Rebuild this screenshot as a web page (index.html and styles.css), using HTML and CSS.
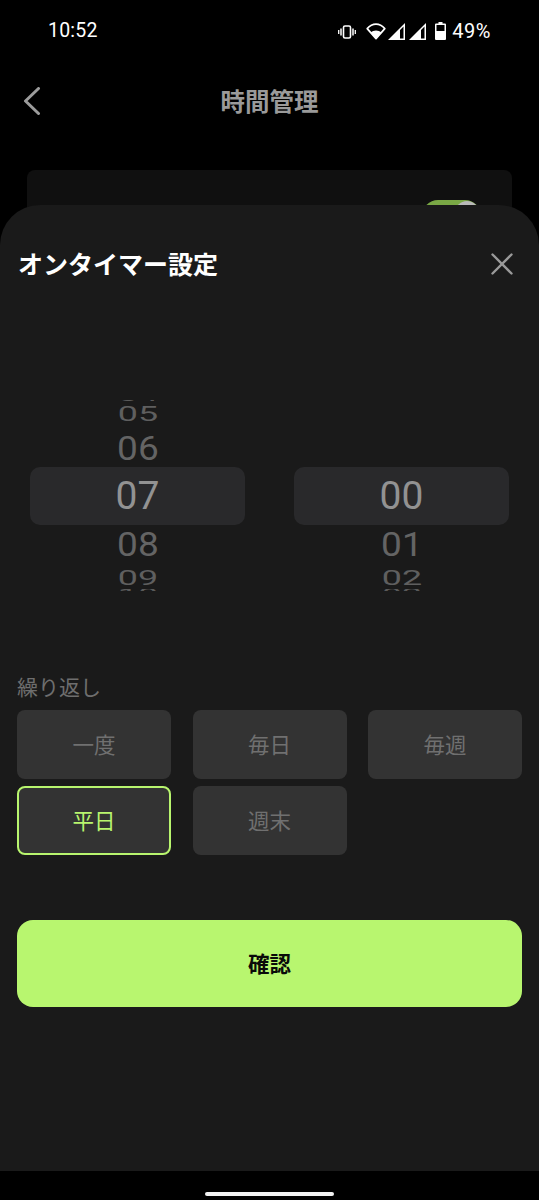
FILE: index.html
```html
<!DOCTYPE html>
<html lang="ja">
<head>
<meta charset="utf-8">
<title>時間管理</title>
<link rel="stylesheet" href="styles.css">
</head>
<body>
<div class="page">
  <div class="content">
    <div class="status">
      <span class="time">10:52</span>
      <div class="status-icons">
        <svg class="i-vib" width="18" height="14" viewBox="0 0 18 14"><rect x="5.5" y="1" width="7" height="12" rx="1.5" fill="none" stroke="#fff" stroke-width="1.6"/><path d="M3 3.5v7M15 3.5v7" stroke="#fff" stroke-width="1.5"/><path d="M.7 5v4M17.3 5v4" stroke="#fff" stroke-width="1.3"/></svg>
        <svg class="i-wifi" width="20" height="17" viewBox="0 0 20 17"><path d="M10 15.6 1.2 5.6C3.5 3 6.6 1.2 10 1.2s6.5 1.800 8.800 4.400z" fill="none" stroke="#fff" stroke-width="1.700" stroke-linejoin="round"/><path d="M10 16 4.600 9.400C6 8.200 8 7.400 10 7.400s4 .8 5.400 2z" fill="#fff"/></svg>
        <svg class="i-sig" width="17" height="17" viewBox="0 0 17 17"><path d="M0 17 17 0v17zM15.500 3.600 12 7.100v8.400h3.500z" fill="#fff" fill-rule="evenodd"/></svg>
        <svg class="i-sig" width="17" height="17" viewBox="0 0 17 17"><path d="M0 17 17 0v17zM15.500 3.600 12 7.100v8.400h3.500z" fill="#fff" fill-rule="evenodd"/></svg>
        <svg class="i-bat" width="11" height="18" viewBox="0 0 11 18"><path d="M3.500 0h4v1.500H10a1 1 0 0 1 1 1V17a1 1 0 0 1-1 1H1a1 1 0 0 1-1-1V2.500a1 1 0 0 1 1-1h2.500z" fill="#fff"/><rect x="1.500" y="3" width="8" height="6" fill="#000"/></svg>
        <span class="pct">49%</span>
      </div>
    </div>
    <header class="top">
      <svg class="back" width="18" height="28" viewBox="0 0 18 28"><path d="M15.500 1.500 2.500 14l13 12.500" fill="none" stroke="#9c9c9c" stroke-width="3" stroke-linecap="round" stroke-linejoin="round"/></svg>
      <h1 class="top-title">時間管理</h1>
    </header>
    <div class="card">
      <div class="toggle"><span class="thumb"></span></div>
    </div>

    <section class="sheet">
      <div class="sheet-head">
        <h2 class="sheet-title">オンタイマー設定</h2>
        <svg class="close" width="22" height="22" viewBox="0 0 22 22"><path d="M1.500 1.500l19 19M20.500 1.500l-19 19" stroke="#9a9a9a" stroke-width="2.400" stroke-linecap="round"/></svg>
      </div>
      <div class="picker">
        <div class="wheel">
          <div class="r r-frag"><span>04</span></div>
          <div class="r r-far"><span>05</span></div>
          <div class="r r-near"><span>06</span></div>
          <div class="r r-sel"><span>07</span></div>
          <div class="r r-near"><span>08</span></div>
          <div class="r r-far r-below"><span>09</span></div>
          <div class="r r-frag r-fragb"><span>10</span></div>
        </div>
        <div class="wheel">
          <div class="r r-frag"></div>
          <div class="r r-far"></div>
          <div class="r r-near"></div>
          <div class="r r-sel"><span>00</span></div>
          <div class="r r-near"><span>01</span></div>
          <div class="r r-far r-below"><span>02</span></div>
          <div class="r r-frag r-fragb"><span>03</span></div>
        </div>
      </div>
      <div class="repeat-label">繰り返し</div>
      <div class="chips">
        <button class="chip">一度</button>
        <button class="chip">毎日</button>
        <button class="chip">毎週</button>
        <button class="chip chip-on">平日</button>
        <button class="chip">週末</button>
      </div>
      <button class="confirm">確認</button>
    </section>
  </div>
  <footer class="nav"><span class="home"></span></footer>
</div>
</body>
</html>
```
FILE: styles.css
```css
* { box-sizing: border-box; margin: 0; padding: 0; }
html, body { background: #000; }
body { width: 539px; height: 1200px; overflow: hidden; font-family: Roboto, "Noto Sans CJK JP", sans-serif; }
.page { height: 1200px; display: flex; flex-direction: column; }
.content { position: relative; flex: 1; overflow: hidden; }

.status { height: 60px; padding: 19px 48px 0; display: flex; justify-content: space-between; align-items: flex-start; color: #fff; }
.time { font-size: 19.500px; line-height: 23px; letter-spacing: .2px; }
.status-icons { display: flex; align-items: center; height: 22px; position: relative; top: 1px; }
.i-vib { margin-right: 10px; margin-top: 2px; }
.i-wifi { margin-right: 2px; }
.i-sig { margin-right: 4px; margin-top: 1px; }
.i-sig + .i-bat { margin-left: 5px; }
.pct { font-size: 20px; line-height: 22px; margin-left: 6px; letter-spacing: .5px; }

.top { position: relative; height: 56px; margin-top: 13px; display: flex; align-items: center; justify-content: center; }
.back { position: absolute; left: 23px; top: 14px; }
.top-title { font: 700 24.500px/30px "Noto Sans CJK JP", sans-serif; color: #9a9a9a; }

.card { position: relative; height: 120px; margin: 41px 27px 0; border-radius: 8px; background: #101010; }
.toggle { position: absolute; left: 395px; top: 30px; width: 59px; height: 32px; border-radius: 16px; background: #7aa845; }
.thumb { position: absolute; right: 2px; top: 1px; width: 24px; height: 24px; border-radius: 50%; background: #b9b9b9; }

.sheet { position: absolute; left: 0; right: 0; top: 205px; bottom: 0; background: #1a1a1a; border-radius: 40px 40px 0 0; padding: 0 17px; }
.sheet-head { height: 117px; display: flex; justify-content: space-between; align-items: flex-start; padding: 41px 0 0 1px; }
.sheet-title { font: 700 25px/34px "Noto Sans CJK JP", sans-serif; color: #fff; }
.close { margin-top: 7px; margin-right: 9px; }

.picker { height: 191px; margin: 78px 13px 0; display: flex; gap: 49px; overflow: hidden; }
.wheel { width: 215px; display: flex; flex-direction: column; color: #666; font-size: 39px; }
.r { display: flex; justify-content: center; align-items: center; flex: none; }
.r span { display: block; }
.r-frag { height: 2px; line-height: 2px; overflow: hidden; }
.r-frag span { transform: translateY(-5px) scale(.92, .4); color: #5a5a5a; }
.r-fragb { margin-top: 3px; }
.r-fragb span { transform: translateY(5px) scale(.92, .4); }
.r-far { height: 16px; line-height: 16px; margin: 4px 0 8px; }
.r-far span { transform: scale(.92, .52); color: #5f5f5f; }
.r-far.r-below { margin: 8px 0 0; }
.r-near { height: 36px; line-height: 36px; }
.r-near span { transform: translateY(1px) scale(.95, .87); color: #646464; }
.r-sel { height: 58px; line-height: 58px; margin: 1px 0; background: #29292b; border-radius: 10px; color: #929292; }

.repeat-label { margin-top: 80px; font: 400 21px/30px "Noto Sans CJK JP", sans-serif; color: #6e6e6e; }
.chips { display: grid; grid-template-columns: repeat(3, 154px); grid-auto-rows: 69px; gap: 7px 21.500px; margin-top: 9px; }
.chip { border: 0; border-radius: 8px; background: #333; color: #707070; font: 400 21.500px/30px "Noto Sans CJK JP", sans-serif; padding-bottom: 2px; }
.chip-on { border: 2px solid #b8f56e; border-radius: 8px; color: #b8f56e; }
.confirm { display: block; width: 505px; height: 87px; margin-top: 65px; padding-bottom: 2px; border: 0; border-radius: 16px; background: #b8f66f; color: #0a0a0a; font: 700 21.500px/30px "Noto Sans CJK JP", sans-serif; }

.nav { height: 29px; flex: none; background: #000; display: flex; justify-content: center; padding-top: 21px; }
.home { width: 129px; height: 4px; border-radius: 2px; background: #f2f2f2; }
```
